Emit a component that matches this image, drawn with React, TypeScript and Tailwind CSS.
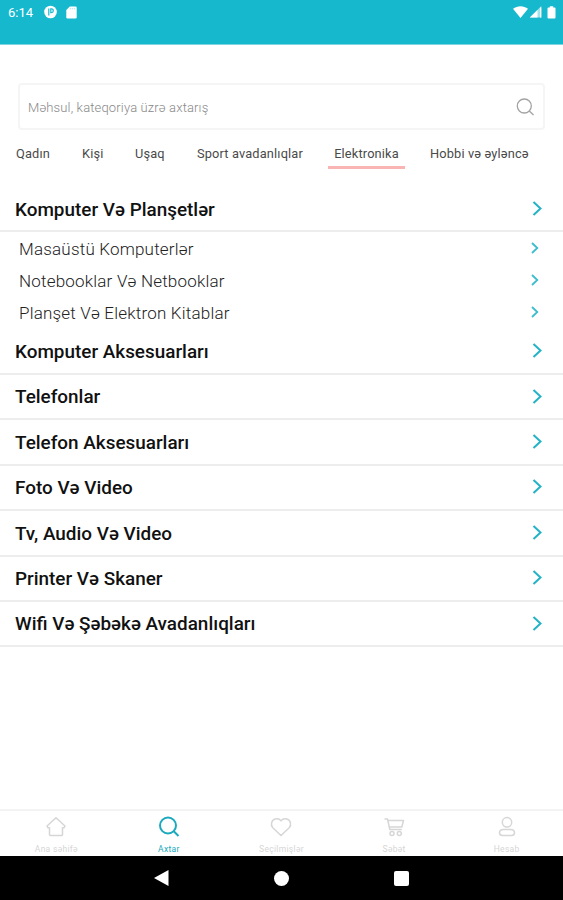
import { ReactNode } from "react";

const tabs = [
  { label: "Qadın", box: "ml-4 w-[34px]" },
  { label: "Kişi", box: "ml-8 w-[22px]" },
  { label: "Uşaq", box: "ml-[31px] w-[31px]" },
  { label: "Sport avadanlıqlar", box: "ml-[31px] w-[106px]" },
  { label: "Elektronika", box: "ml-[25px] w-[77px]", active: true },
  { label: "Hobbi və əyləncə", box: "ml-[25px] w-[101px]" },
];

const categories = [
  {
    title: "Komputer Və Planşetlər",
    children: [
      "Masaüstü Komputerlər",
      "Notebooklar Və Netbooklar",
      "Planşet Və Elektron Kitablar",
    ],
  },
  { title: "Komputer Aksesuarları" },
  { title: "Telefonlar" },
  { title: "Telefon Aksesuarları" },
  { title: "Foto Və Video" },
  { title: "Tv, Audio Və Video" },
  { title: "Printer Və Skaner" },
  { title: "Wifi Və Şəbəkə Avadanlıqları" },
];

function StatusBar() {
  return (
    <header className="h-[45px] shrink-0 bg-[#16b8ce] border-b border-[#7fd4e0] text-white">
      <div className="flex items-center h-6 pl-2 pr-[7px]">
        <span className="text-[13px] leading-none w-[26px] whitespace-nowrap">6:14</span>
        <svg className="ml-[10px]" width="13" height="14" viewBox="0 0 13 14">
          <circle cx="6.5" cy="7" r="6.3" fill="#fff" />
          <path d="M4.800 10.500V3.500M6.800 3.800h.6a1.900 1.900 0 0 1 0 3.800h-.6z" fill="none" stroke="#16b8ce" strokeWidth="1.2" />
        </svg>
        <svg className="ml-[9px]" width="11" height="13" viewBox="0 0 11 13">
          <path d="M3.8.5H9.5a1.2 1.2 0 0 1 1.2 1.2v9.6a1.2 1.2 0 0 1-1.2 1.2h-8A1.2 1.2 0 0 1 .3 11.3V4z" fill="#fff" />
          <path d="M4.3 2v1.3M6.3 2v1.3M8.3 2v1.3" stroke="#9bdde7" strokeWidth=".8" />
        </svg>
        <svg className="ml-auto" width="15" height="12" viewBox="0 0 15 12">
          <path d="M0 2.8C4.3-.6 10.7-.6 15 2.8L7.5 12z" fill="#fff" />
        </svg>
        <svg className="ml-[1px]" width="13" height="12" viewBox="0 0 13 12">
          <path d="M12.3 0V11.5H.8z" fill="#fff" fillOpacity=".6" />
          <path d="M8.5 4V11.5H.8zM11 1.5h1.3v10H11z" fill="#fff" />
        </svg>
        <svg className="ml-[5px]" width="9" height="13" viewBox="0 0 9 13">
          <path d="M2.8.3h3.4v1.2h1.3q1 0 1 1v9q0 1-1 1h-6q-1 0-1-1v-9q0-1 1-1h1.3z" fill="#fff" />
        </svg>
      </div>
    </header>
  );
}

function Chevron({ small }: { small?: boolean }) {
  return small ? (
    <svg className="mr-[23px] mb-[2px]" width="10" height="12" viewBox="0 0 10 12" fill="none">
      <path d="M2 1l5.3 5L2 11" stroke="#3dbccb" strokeWidth="1.8" />
    </svg>
  ) : (
    <svg className="mr-5 mb-px" width="11" height="15" viewBox="0 0 11 15" fill="none">
      <path d="M1.5 1l7 6.5-7 6.5" stroke="#22b3c5" strokeWidth="2" />
    </svg>
  );
}

function NavItem({ label, active, children }: { label: string; active?: boolean; children: ReactNode }) {
  return (
    <div className={`flex-1 flex flex-col items-center pt-1 ${active ? "text-[#1ba9bd]" : "text-[#d6d6d6]"}`}>
      <svg width="24" height="24" viewBox="0 0 24 24" fill="none" stroke="currentColor" strokeWidth={active ? 2 : 1.5}>
        {children}
      </svg>
      <span className="mt-[5px] text-[8.5px] tracking-[0.3px] leading-[10px]">{label}</span>
    </div>
  );
}

export default function App() {
  return (
    <div className="flex flex-col h-[900px] w-[563px] bg-white overflow-hidden font-[Roboto,sans-serif]">
      <StatusBar />

      <div className="mx-[18px] mt-[38px] h-[47px] shrink-0 flex items-center justify-between border-2 border-[#f5f5f5] rounded px-2">
        <span className="mt-[2px] text-[13px] tracking-[0.15px] font-light text-[#888]">Məhsul, kateqoriya üzrə axtarış</span>
        <svg width="20" height="20" viewBox="0 0 20 20" fill="none" stroke="#a3a3a3" strokeWidth="1.3">
          <circle cx="9.3" cy="9" r="7" />
          <path d="M14.3 14l4.2 4" />
        </svg>
      </div>

      <nav className="flex mt-[14px] h-[25px] shrink-0 text-[12.8px] tracking-[0.15px] leading-5 text-[#4a4a4a]">
        {tabs.map((tab) => (
          <div
            key={tab.label}
            className={`${tab.box} shrink-0 whitespace-nowrap ${tab.active ? "text-center border-b-3 border-[#f9b4b4]" : ""}`}
          >
            {tab.label}
          </div>
        ))}
      </nav>

      <main className="flex-1 mt-[18px]">
        {categories.map((category) => (
          <section key={category.title}>
            <div className="flex items-center justify-between h-[45.43px] pl-[15px] border-b-2 border-[#ededed]">
              <h2 className="mt-[2px] text-[18.9px] font-medium text-[#111]">{category.title}</h2>
              <Chevron />
            </div>
            {category.children && (
              <ul className="pt-px">
                {category.children.map((child) => (
                  <li key={child} className="flex items-center justify-between h-8 pl-[19px] text-[17px] tracking-[0.2px] font-light text-[#222]">
                    <span className="mt-px">{child}</span>
                    <Chevron small />
                  </li>
                ))}
              </ul>
            )}
          </section>
        ))}
      </main>

      <footer className="shrink-0">
        <div className="flex h-[47px] border-t-2 border-[#f3f3f3]">
          <NavItem label="Ana səhifə">
            <path d="M12 2.8l9 8.2-1 1.8h-1.500v7q0 .7-.7.7H6.2q-.7 0-.7-.7v-7H4L3 11z" strokeLinejoin="round" />
          </NavItem>
          <NavItem label="Axtar" active>
            <circle cx="11" cy="10.5" r="8" />
            <path d="M16.5 16l5 5" />
          </NavItem>
          <NavItem label="Seçilmişlər">
            <path d="M12 20.5L3.8 12.7C1.3 10 2.3 5 6.3 4c2.7-.6 4.7.4 5.7 1.9 1-1.5 3-2.5 5.7-1.9 4 1 5 6 2.5 8.7z" strokeLinejoin="round" />
          </NavItem>
          <NavItem label="Səbət">
            <path d="M2.5 4h3l2.3 10.5h12M6 5.5h15.5L19.8 12H7.5" strokeLinejoin="round" />
            <circle cx="10" cy="18.5" r="2" />
            <circle cx="17.3" cy="18.5" r="2" />
          </NavItem>
          <NavItem label="Hesab">
            <circle cx="12" cy="7.3" r="4.7" />
            <path d="M8.5 14.5h7c2.3 0 4 1.3 4 3.2s-1.2 2.8-3.2 2.8H7.7c-2 0-3.2-1-3.2-2.8s1.7-3.2 4-3.2z" />
          </NavItem>
        </div>

        <div className="flex items-center justify-center gap-[105px] h-11 bg-black">
          <svg width="15" height="16" viewBox="0 0 15 16" fill="#fff">
            <path d="M0 8L14.5 0v16z" />
          </svg>
          <div className="size-[15px] rounded-full bg-white" />
          <div className="size-[15px] rounded-[2px] bg-white" />
        </div>
      </footer>
    </div>
  );
}
